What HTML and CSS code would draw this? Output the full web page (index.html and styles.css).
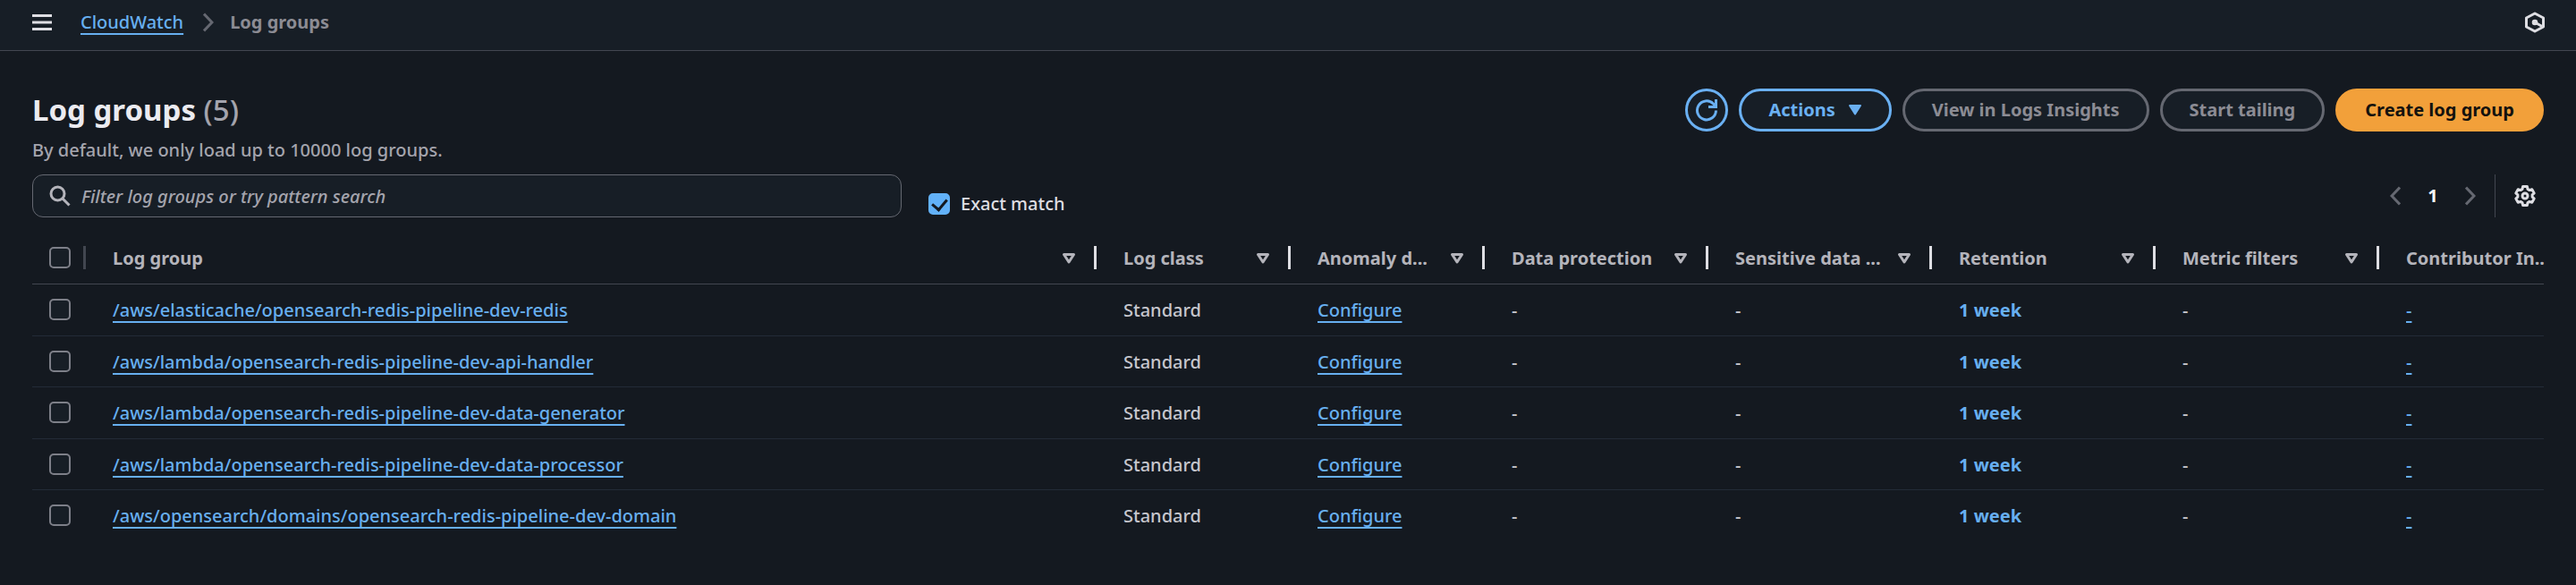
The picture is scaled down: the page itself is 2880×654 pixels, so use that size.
FILE: index.html
```html
<!DOCTYPE html>
<html lang="en">
<head>
<meta charset="utf-8">
<meta name="viewport" content="width=device-width, initial-scale=1">
<title>Log groups | CloudWatch</title>
<link rel="stylesheet" href="styles.css">
</head>
<body>
<svg class="sprite" aria-hidden="true">
  <symbol id="sort" viewBox="0 0 16 14"><path d="M2.500 2.500h11L8 11z" fill="none" stroke="currentColor" stroke-width="3" stroke-linejoin="round"/></symbol>
</svg>
<header class="topbar">
  <button class="icon-button" type="button" aria-label="Open navigation">
    <svg width="22" height="20" viewBox="0 0 22 20"><path d="M0 2.500h22M0 10h22M0 17.500h22" stroke="currentColor" stroke-width="3"/></svg>
  </button>
  <nav class="breadcrumbs" aria-label="Breadcrumbs">
    <a class="link" href="#">CloudWatch</a>
    <svg class="crumb-arrow" width="12" height="22" viewBox="0 0 12 22"><path d="M1 1.500l9 9.500-9 9.500" fill="none" stroke="currentColor" stroke-width="3"/></svg>
    <span class="crumb-current">Log groups</span>
  </nav>
  <button class="icon-button" type="button" aria-label="Open assistant">
    <svg width="24" height="24" viewBox="0 0 24 24" fill="none" stroke="currentColor" stroke-width="3" stroke-linejoin="round"><path d="M21.500 7v10L12 22l-9.500-5V7L12 2z"/><path d="M12 12l9 5"/><circle cx="12" cy="12" r="1.800" fill="currentColor"/></svg>
  </button>
</header>
<main class="content">
  <section class="heading">
    <div>
      <h1 class="title">Log groups <span class="count">(5)</span></h1>
      <p class="description">By default, we only load up to 10000 log groups.</p>
    </div>
    <div class="actions">
      <button class="button button-round" type="button" aria-label="Refresh">
        <svg width="26" height="26" viewBox="0 0 26 26" fill="none" stroke="currentColor" stroke-width="3"><path d="M23.500 13.500A10.500 10.500 0 1 1 20.500 6l2.500 2.500"/><path d="M23.500 1v8.500H15"/></svg>
      </button>
      <button class="button" type="button">Actions <svg class="caret" width="16" height="14" viewBox="0 0 16 14"><path d="M2 2h12L8 11.500z" fill="currentColor" stroke="currentColor" stroke-width="2" stroke-linejoin="round"/></svg></button>
      <button class="button" type="button" disabled>View in Logs Insights</button>
      <button class="button" type="button" disabled>Start tailing</button>
      <button class="button button-primary" type="button">Create log group</button>
    </div>
  </section>
  <section class="tools">
    <label class="search">
      <svg width="24" height="24" viewBox="0 0 24 24" fill="none" stroke="currentColor" stroke-width="3"><circle cx="9.500" cy="9.500" r="7.500"/><path d="M15 15l7.500 7.500"/></svg>
      <input class="search-input" type="text" placeholder="Filter log groups or try pattern search" aria-label="Filter log groups">
    </label>
    <label class="exact"><input class="check" type="checkbox" checked> Exact match</label>
    <div class="paging">
      <button class="icon-button arrow" type="button" aria-label="Previous page" disabled><svg width="12" height="22" viewBox="0 0 12 22"><path d="M11 1.500L2 11l9 9.500" fill="none" stroke="currentColor" stroke-width="3"/></svg></button>
      <button class="page" type="button" aria-current="page">1</button>
      <button class="icon-button arrow" type="button" aria-label="Next page" disabled><svg width="12" height="22" viewBox="0 0 12 22"><path d="M1 1.500l9 9.500-9 9.500" fill="none" stroke="currentColor" stroke-width="3"/></svg></button>
      <span class="divider"></span>
      <button class="icon-button" type="button" aria-label="Preferences">
        <svg width="26" height="26" viewBox="0 0 26 26" fill="none" stroke="currentColor" stroke-width="3" stroke-linejoin="round"><path d="M10.600 2.600H15.400L16 5.400L18 6.600L20.800 5.700L23.200 9.900L21.100 11.900V14.100L23.200 16.100L20.800 20.300L18 19.400L16 20.600L15.400 23.400H10.600L10 20.600L8 19.400L5.200 20.300L2.800 16.100L4.900 14.100V11.900L2.800 9.900L5.200 5.700L8 6.600L10 5.400Z"/><circle cx="13" cy="13" r="3"/></svg>
      </button>
    </div>
  </section>
  <div class="table-wrap">
    <table class="table">
      <colgroup><col class="col-check"><col><col class="col-narrow"><col class="col-narrow"><col class="col-wide"><col class="col-wide"><col class="col-wide"><col class="col-wide"><col class="col-last"></colgroup>
      <thead>
        <tr>
          <th class="select"><div class="head"><input class="check" type="checkbox" aria-label="Select all"></div></th>
          <th><div class="head">Log group<svg class="sort"><use href="#sort"/></svg></div></th>
          <th><div class="head">Log class<svg class="sort"><use href="#sort"/></svg></div></th>
          <th><div class="head">Anomaly d...<svg class="sort"><use href="#sort"/></svg></div></th>
          <th><div class="head">Data protection<svg class="sort"><use href="#sort"/></svg></div></th>
          <th><div class="head">Sensitive data ...<svg class="sort"><use href="#sort"/></svg></div></th>
          <th><div class="head">Retention<svg class="sort"><use href="#sort"/></svg></div></th>
          <th><div class="head">Metric filters<svg class="sort"><use href="#sort"/></svg></div></th>
          <th><div class="head head-last">Contributor In..</div></th>
        </tr>
      </thead>
      <tbody>
        <tr><td class="select"><input class="check" type="checkbox" aria-label="Select row 1"></td><td><a class="link" href="#">/aws/elasticache/opensearch-redis-pipeline-dev-redis</a></td><td>Standard</td><td><a class="link" href="#">Configure</a></td><td>-</td><td>-</td><td><a class="retention" href="#">1 week</a></td><td>-</td><td><a class="link" href="#">-</a></td></tr>
        <tr><td class="select"><input class="check" type="checkbox" aria-label="Select row 2"></td><td><a class="link" href="#">/aws/lambda/opensearch-redis-pipeline-dev-api-handler</a></td><td>Standard</td><td><a class="link" href="#">Configure</a></td><td>-</td><td>-</td><td><a class="retention" href="#">1 week</a></td><td>-</td><td><a class="link" href="#">-</a></td></tr>
        <tr><td class="select"><input class="check" type="checkbox" aria-label="Select row 3"></td><td><a class="link" href="#">/aws/lambda/opensearch-redis-pipeline-dev-data-generator</a></td><td>Standard</td><td><a class="link" href="#">Configure</a></td><td>-</td><td>-</td><td><a class="retention" href="#">1 week</a></td><td>-</td><td><a class="link" href="#">-</a></td></tr>
        <tr><td class="select"><input class="check" type="checkbox" aria-label="Select row 4"></td><td><a class="link" href="#">/aws/lambda/opensearch-redis-pipeline-dev-data-processor</a></td><td>Standard</td><td><a class="link" href="#">Configure</a></td><td>-</td><td>-</td><td><a class="retention" href="#">1 week</a></td><td>-</td><td><a class="link" href="#">-</a></td></tr>
        <tr><td class="select"><input class="check" type="checkbox" aria-label="Select row 5"></td><td><a class="link" href="#">/aws/opensearch/domains/opensearch-redis-pipeline-dev-domain</a></td><td>Standard</td><td><a class="link" href="#">Configure</a></td><td>-</td><td>-</td><td><a class="retention" href="#">1 week</a></td><td>-</td><td><a class="link" href="#">-</a></td></tr>
      </tbody>
    </table>
  </div>
</main>
</body>
</html>
```
FILE: styles.css
```css
* { box-sizing: border-box; }

body {
  margin: 0;
  background: #141920;
  color: #c6c6cd;
  font: 500 20px/28px "Noto Sans", "Open Sans", sans-serif;
}

button, input { font: inherit; color: inherit; }
.sprite { display: none; }
svg { display: block; flex: none; }

.topbar {
  display: flex;
  align-items: center;
  height: 57px;
  padding: 0 34px 6px 36px;
  border-bottom: 1px solid #424650;
  background: #171e26;
}
.icon-button {
  display: flex;
  padding: 0;
  border: 0;
  background: none;
  color: #dedee3;
}
.breadcrumbs {
  display: flex;
  flex: 1;
  align-items: center;
  margin-left: 32px;
}
.crumb-arrow { margin: 0 18px 0 22px; color: #656871; }
.crumb-current { color: #8c8c94; font-weight: 700; }

.link {
  color: #67aff0;
  text-decoration: underline;
  text-decoration-thickness: 2px;
  text-underline-offset: 5px;
  text-decoration-skip-ink: none;
}

.content { padding: 42px 36px 0; }
.heading { display: flex; justify-content: space-between; }
.title {
  margin: 4px 0 0;
  color: #ebebf0;
  font-size: 33px;
  line-height: 40px;
}
.count { color: #a4a4ad; font-weight: 500; }
.description { margin: 11px 0 0; color: #a4a4ad; }

.actions { display: flex; align-items: flex-start; gap: 12px; }
.button {
  display: flex;
  align-items: center;
  height: 48px;
  padding: 0 30px;
  border: 3px solid #6ab0f2;
  border-radius: 24px;
  background: #171e26;
  color: #6ab0f2;
  font-weight: 700;
}
.button-round { width: 48px; padding: 0; justify-content: center; }
.button:disabled { border-color: #656871; color: #8c8c94; }
.button-primary { border-color: #f2a03a; background: #f2a03a; color: #14120e; }
.caret { margin-left: 14px; }

.tools { display: flex; margin-top: 13px; }
.search {
  display: flex;
  flex: 0 1 972px;
  align-items: center;
  gap: 12px;
  height: 48px;
  padding: 0 18px;
  border: 1px solid #656871;
  border-radius: 12px;
  background: #171e26;
  color: #b4b4bb;
}
.search-input {
  flex: 1;
  padding: 1px 0 0;
  border: 0;
  outline: 0;
  background: none;
}
.search-input::placeholder { color: #a4a4ad; font-style: italic; opacity: 1; }
.exact {
  display: flex;
  align-items: center;
  gap: 12px;
  margin: 18px 0 0 30px;
  color: #dedee3;
}
.check {
  display: block;
  flex: none;
  width: 24px;
  height: 24px;
  margin: 0;
  border: 2px solid #7d7f88;
  border-radius: 5px;
  background: #171e26;
  appearance: none;
}
.check:checked {
  border-color: #62b1f8;
  background: #62b1f8;
}
.check:checked::before {
  content: "";
  display: block;
  width: 8px;
  height: 13px;
  margin: 1px auto 0;
  border: solid #141920;
  border-width: 0 3px 3px 0;
  transform: rotate(40deg);
}
.paging { display: flex; align-items: center; margin-left: auto; padding-right: 8px; }
.arrow { color: #656871; }
.page {
  width: 72px;
  padding: 0;
  border: 0;
  background: none;
  color: #f5f5f8;
  font-weight: 700;
}
.divider { width: 1px; height: 48px; margin: 0 20px 0 21px; background: #424650; }

.table-wrap { margin-top: 17px; }
.table {
  width: 100%;
  table-layout: fixed;
  border-collapse: collapse;
}
.col-check { width: 60px; }
.col-narrow { width: 217px; }
.col-wide { width: 250px; }
.col-last { width: 184px; }
.table th, .table td {
  padding: 2px 0 0 30px;
  text-align: left;
  white-space: nowrap;
}
.table th { height: 57px; padding-top: 0; border-bottom: 1px solid #424650; color: #b4b4bb; }
.table td { height: 57px; border-bottom: 1px solid #232b37; }
.table tbody tr:nth-child(odd) td { height: 58px; }
.table tbody tr:last-child td { border-bottom: 0; }
.table .select { padding: 0 0 0 19px; }
.head {
  display: flex;
  align-items: center;
  justify-content: space-between;
  height: 26px;
  padding: 2px 20px 0 0;
  border-right: 3px solid #dedee3;
}
.head-last { padding-right: 0; border: 0; }
.select .head { border-color: #424650; padding: 0; }
.sort { width: 16px; height: 14px; }
.retention { color: #67aff0; font-weight: 700; text-decoration: none; }
```
